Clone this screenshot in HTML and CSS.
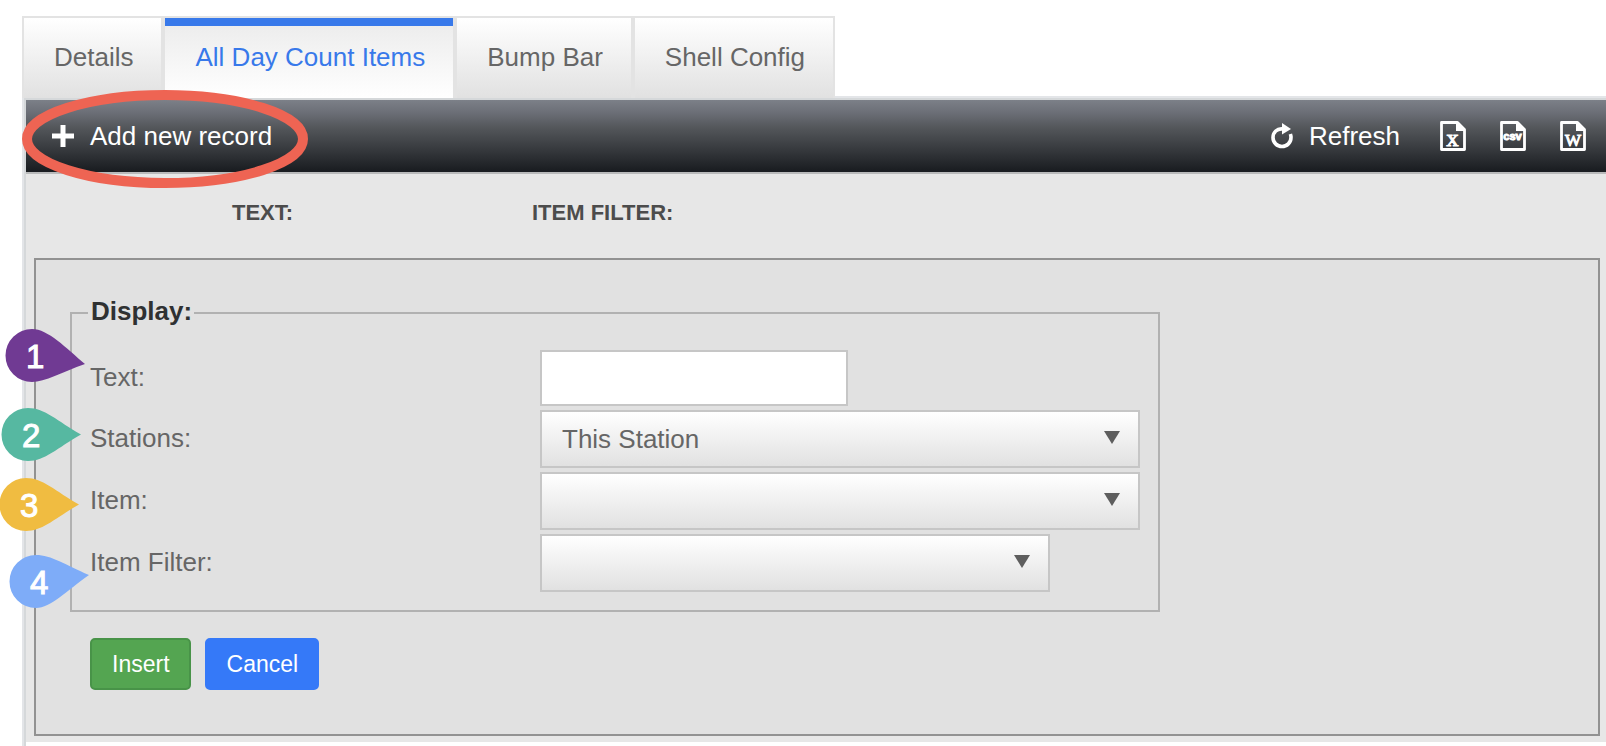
FILE: index.html
```html
<!DOCTYPE html>
<html lang="en">
<head>
    <meta charset="UTF-8">
    <meta name="viewport" content="width=device-width, initial-scale=1.0">
    <title>All Day Count Items</title>
    <link rel="stylesheet" href="styles.css">
</head>
<body>
    <nav class="tabs">
        <a href="#details" class="tab">Details</a>
        <a href="#items" class="tab active">All Day Count Items</a>
        <a href="#bump" class="tab">Bump Bar</a>
        <a href="#shell" class="tab">Shell Config</a>
    </nav>

    <main class="panel">
        <div class="panel-inner">
            <div class="toolbar">
                <button type="button" class="tool">
                    <svg width="22" height="22" viewBox="0 0 22 22"><path d="M0 11h22M11 0v22" stroke="#fff" stroke-width="5"/></svg>
                    Add new record
                </button>
                <div class="tools-right">
                    <button type="button" class="tool">
                        <svg width="22" height="26" viewBox="0 0 22 26">
                            <path d="M12 6C6 5 2 9.500 2 14.500a9 9 0 0 0 18 0c0-1.600-.2-2.400-.6-3.500" fill="none" stroke="#fff" stroke-width="3.600"/>
                            <path d="M11 0l9 6-9 5.500z" fill="#fff"/>
                        </svg>
                        Refresh
                    </button>
                    <button type="button" class="tool" aria-label="Export to Excel">
                        <svg width="26" height="30" viewBox="0 0 26 30">
                            <path d="M1.500 1.500h16l7 7v20h-23z" fill="none" stroke="#fff" stroke-width="2.800" stroke-linejoin="round"/>
                            <path d="M16 1h2l7 7v2h-9z" fill="#fff"/>
                            <text x="12.500" y="25" class="glyph">x</text>
                        </svg>
                    </button>
                    <button type="button" class="tool" aria-label="Export to CSV">
                        <svg width="26" height="30" viewBox="0 0 26 30">
                            <path d="M1.500 1.500h16l7 7v20h-23z" fill="none" stroke="#fff" stroke-width="2.800" stroke-linejoin="round"/>
                            <path d="M16 1h2l7 7v2h-9z" fill="#fff"/>
                            <text x="12.500" y="19" class="glyph glyph-csv">csv</text>
                        </svg>
                    </button>
                    <button type="button" class="tool" aria-label="Export to Word">
                        <svg width="26" height="30" viewBox="0 0 26 30">
                            <path d="M1.500 1.500h16l7 7v20h-23z" fill="none" stroke="#fff" stroke-width="2.800" stroke-linejoin="round"/>
                            <path d="M16 1h2l7 7v2h-9z" fill="#fff"/>
                            <text x="13" y="25" class="glyph glyph-word">W</text>
                        </svg>
                    </button>
                </div>
            </div>

            <table class="grid">
                <thead>
                    <tr>
                        <th class="col-edit"></th>
                        <th class="col-text">TEXT:</th>
                        <th>ITEM FILTER:</th>
                    </tr>
                </thead>
                <tbody>
                    <tr>
                        <td colspan="3">
                            <form class="edit-form">
                                <fieldset>
                                    <legend>Display:</legend>
                                    <div class="fields">
                                        <label for="text">Text:</label>
                                        <input type="text" id="text" name="text">

                                        <label for="stations">Stations:</label>
                                        <div class="select">
                                            <select id="stations" name="stations">
                                                <option>This Station</option>
                                            </select>
                                        </div>

                                        <label for="item">Item:</label>
                                        <div class="select">
                                            <select id="item" name="item">
                                                <option></option>
                                            </select>
                                        </div>

                                        <label for="filter">Item Filter:</label>
                                        <div class="select short">
                                            <select id="filter" name="filter">
                                                <option></option>
                                            </select>
                                        </div>
                                    </div>
                                </fieldset>
                                <div class="actions">
                                    <button type="button" class="btn insert">Insert</button>
                                    <button type="button" class="btn cancel">Cancel</button>
                                </div>
                            </form>
                        </td>
                    </tr>
                </tbody>
            </table>
        </div>
    </main>

    <!-- help annotations over the page -->
    <svg class="highlight" width="288" height="100" viewBox="0 0 288 100">
        <ellipse cx="144" cy="50" rx="138" ry="44" fill="none" stroke="#ee6453" stroke-width="10"/>
    </svg>
    <div class="marker marker-1">
        <svg width="80" height="54" viewBox="0 0 80 54"><path d="M80 35C61 19 43 0 27 0a26.500 26.500 0 0 0 0 53C40 53 57 43 80 35z" fill="#703a93"/></svg>
        <span>1</span>
    </div>
    <div class="marker marker-2">
        <svg width="80" height="54" viewBox="0 0 80 54"><path d="M80 26.500C56 13 44 0 27 0a26.500 26.500 0 0 0 0 53C44 53 56 40 80 26.500z" fill="#56b8a1"/></svg>
        <span>2</span>
    </div>
    <div class="marker marker-3">
        <svg width="80" height="54" viewBox="0 0 80 54"><path d="M80 26.500C56 13 44 0 27 0a26.500 26.500 0 0 0 0 53C44 53 56 40 80 26.500z" fill="#f0bc41"/></svg>
        <span>3</span>
    </div>
    <div class="marker marker-4">
        <svg width="80" height="54" viewBox="0 0 80 54"><path d="M80 20C57 10 42 0 27 0a26.500 26.500 0 0 0 0 53C42 53 57 36 80 20z" fill="#7eacf8"/></svg>
        <span>4</span>
    </div>
</body>
</html>
```

FILE: styles.css
```css
* {
    box-sizing: border-box;
}
body {
    margin: 0;
    padding: 16px 0 0 22px;
    min-height: 100vh;
    display: flex;
    flex-direction: column;
    position: relative;
    overflow-x: hidden;
    font-family: "Liberation Sans", Arial, sans-serif;
    font-size: 26px;
    line-height: 30px;
    color: #666;
    background: #fff;
}
svg {
    display: block;
}
button, input, select {
    font: inherit;
}

/* tabs */
.tabs {
    display: flex;
    margin-bottom: -2px;
    z-index: 1;
}
.tab {
    padding: 24px 28px 26px 30px;
    border: 2px solid #e3e3e3;
    border-bottom: none;
    background: linear-gradient(#fff, #e1e1e1);
    color: #666;
    text-decoration: none;
}
.tab.active {
    background: linear-gradient(#ebebeb, #fff);
    color: #3879ea;
    box-shadow: inset 0 8px #3879ea;
}

.panel {
    flex: 1;
    display: flex;
    border: 2px solid #e3e5e8;
    border-width: 2px 0 0 2px;
}
.panel-inner {
    flex: 1;
    border: 2px solid #d5d8da;
    border-width: 2px 0 0 2px;
}

/* toolbar */
.toolbar {
    display: flex;
    justify-content: space-between;
    align-items: center;
    height: 74px;
    padding: 0 20px 0 26px;
    border-bottom: 2px solid #b9babb;
    background: linear-gradient(#7c8088, #6b6e76 18%, #54575b 38%, #1b1e22 97%);
}
.tools-right {
    display: flex;
    align-items: center;
    gap: 34px;
}
.tool {
    display: flex;
    align-items: center;
    gap: 16px;
    padding: 0;
    border: none;
    background: none;
    color: #fff;
    cursor: pointer;
}
.tools-right .tool:first-child {
    margin-right: 6px;
}
.glyph {
    fill: #fff;
    stroke: #fff;
    font-family: "Liberation Serif", serif;
    font-size: 24px;
    text-anchor: middle;
}
.glyph-csv {
    font-family: "Liberation Sans", Arial, sans-serif;
    font-size: 11px;
    font-weight: bold;
}
.glyph-word {
    font-size: 17px;
}

/* records grid */
.grid {
    width: 100%;
    table-layout: fixed;
    border-collapse: collapse;
    background: #e7e7e7;
}
.grid th {
    height: 84px;
    padding: 0 0 6px;
    font-size: 22px;
    text-align: left;
    color: #4c4c4c;
}
.grid .col-edit {
    width: 206px;
}
.grid .col-text {
    width: 300px;
}
.grid td {
    padding: 0 6px 6px 8px;
}

/* edit form */
.edit-form {
    padding: 36px 34px 44px;
    border: 2px solid #929292;
    background: #e1e1e1;
}
fieldset {
    max-width: 1090px;
    margin: 0;
    padding: 20px 18px 18px 16px;
    border: 2px solid #b1b1b1;
}
legend {
    padding: 0 2px 4px 3px;
    font-weight: bold;
    color: #2f3132;
}
.fields {
    display: grid;
    grid-template-columns: 450px 1fr;
    gap: 4px 0;
    align-items: center;
    padding-left: 2px;
}
.fields label {
    padding-bottom: 3px;
}
.fields input {
    width: 308px;
    height: 56px;
    padding: 0 20px;
    border: 2px solid #c6c6c6;
    background: #fff;
    color: #666;
}
.select {
    position: relative;
}
.select.short {
    width: 85%;
}
.select select {
    display: block;
    width: 100%;
    height: 58px;
    padding: 0 50px 0 20px;
    border: 2px solid #c6c6c6;
    border-radius: 0;
    appearance: none;
    background: linear-gradient(#fff, #e1e1e1);
    color: #666;
}
.select::after {
    content: "";
    position: absolute;
    top: 21px;
    right: 20px;
    border: 8px solid transparent;
    border-top: 13px solid #5e5e5e;
    border-bottom: none;
    pointer-events: none;
}
.actions {
    display: flex;
    gap: 14px;
    margin: 26px 0 0 20px;
}
.btn {
    height: 52px;
    padding: 0 19px 0 20px;
    border: 2px solid #3579f8;
    border-radius: 5px;
    font-size: 23px;
    color: #fff;
    cursor: pointer;
}
.btn.insert {
    border-color: #489348;
    background: #54a551;
}
.btn.cancel {
    background: #3579f8;
}

/* annotations */
.highlight {
    position: absolute;
    top: 89px;
    left: 21px;
    z-index: 2;
    pointer-events: none;
}
.marker {
    position: absolute;
    z-index: 2;
    color: #fff;
    font-size: 33px;
}
.marker span {
    position: absolute;
    top: 13px;
    left: 21px;
    -webkit-text-stroke: 1px #fff;
}
.marker-1 {
    top: 329px;
    left: 5px;
}
.marker-2 {
    top: 408px;
    left: 1px;
}
.marker-3 {
    top: 478px;
    left: -1px;
}
.marker-4 {
    top: 555px;
    left: 9px;
}
```
